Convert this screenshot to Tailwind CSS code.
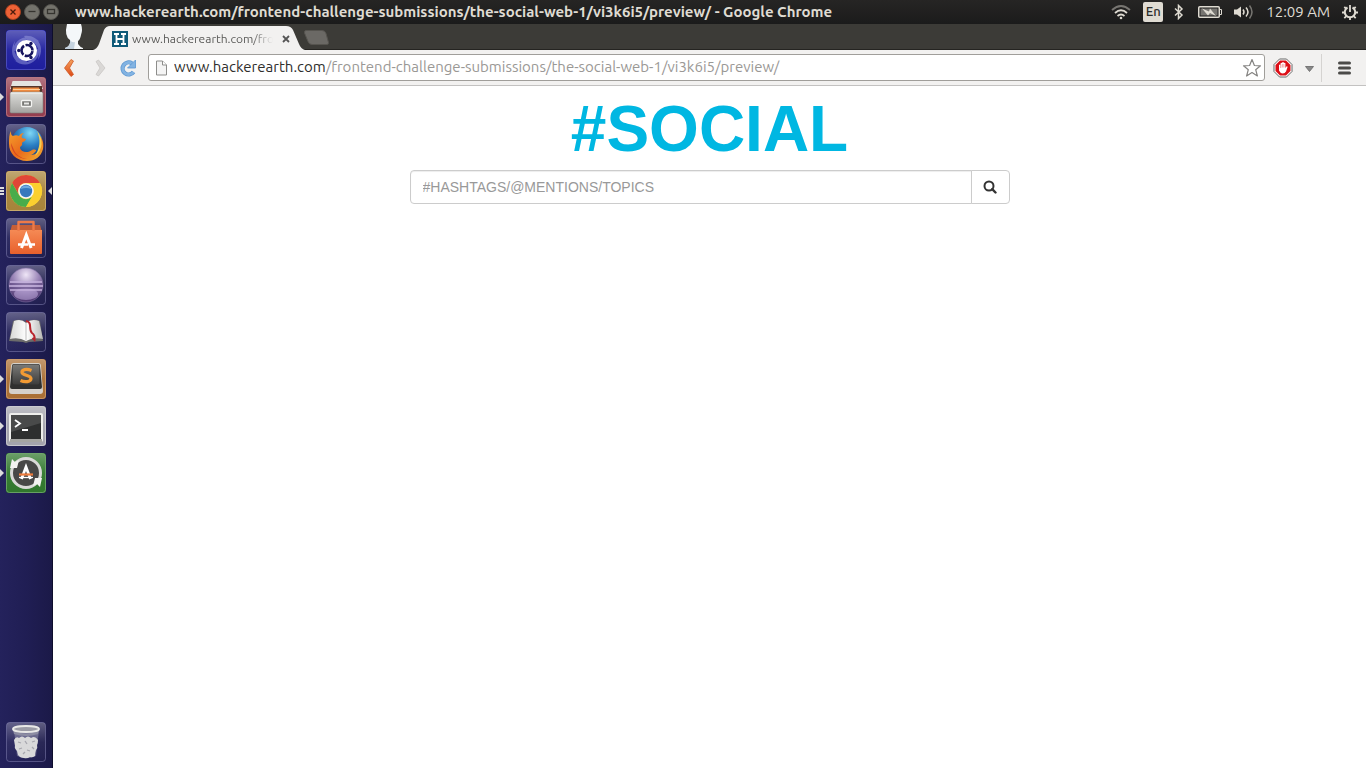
<!DOCTYPE html>
<html lang="en">
<head>
<meta charset="utf-8">
<meta name="viewport" content="width=device-width, initial-scale=1">
<title>#SOCIAL</title>
<script src="https://cdn.jsdelivr.net/npm/@tailwindcss/browser@4"></script>
</head>
<body class="flex h-screen flex-col overflow-hidden bg-white font-['Ubuntu','Noto_Sans',sans-serif]">
<svg class="absolute size-0" aria-hidden="true">
  <defs>
    <linearGradient id="gloss" x1="0" y1="0" x2="0" y2="1"><stop offset="0" stop-color="#fff" stop-opacity=".3"/><stop offset=".5" stop-color="#fff" stop-opacity=".06"/><stop offset="1" stop-color="#fff" stop-opacity=".02"/></linearGradient>
    <linearGradient id="silver" x1="0" y1="0" x2="0" y2="1"><stop offset="0" stop-color="#dededb"/><stop offset="1" stop-color="#a3a3a0"/></linearGradient>
    <linearGradient id="dark" x1="0" y1="0" x2="0" y2="1"><stop offset="0" stop-color="#7a7a78"/><stop offset="1" stop-color="#3c3c3b"/></linearGradient>
    <linearGradient id="orange" x1="0" y1="0" x2="0" y2="1"><stop offset="0" stop-color="#f58a55"/><stop offset="1" stop-color="#e8602c"/></linearGradient>
    <linearGradient id="back" x1="0" y1="0" x2="0" y2="1"><stop offset="0" stop-color="#f5a25e"/><stop offset="1" stop-color="#dd4814"/></linearGradient>
    <radialGradient id="globe" cx=".6" cy=".2" r=".8"><stop offset="0" stop-color="#7fd8f5"/><stop offset=".5" stop-color="#2a7fc4"/><stop offset="1" stop-color="#153a7c"/></radialGradient>
    <linearGradient id="fox" x1="0" y1="0" x2="1" y2="1"><stop offset="0" stop-color="#f5a02b"/><stop offset=".5" stop-color="#ea6a1c"/><stop offset="1" stop-color="#f3b431"/></linearGradient>
    <radialGradient id="purple" cx=".5" cy=".2" r=".85"><stop offset="0" stop-color="#efe6f7"/><stop offset=".45" stop-color="#9b86b8"/><stop offset="1" stop-color="#3c2560"/></radialGradient>
    <linearGradient id="page" x1="0" y1="0" x2="1" y2="0"><stop offset="0" stop-color="#d8d8d6"/><stop offset=".5" stop-color="#fff"/><stop offset="1" stop-color="#b9b9b7"/></linearGradient>
  </defs>
</svg>

<!-- Top panel -->
<header class="flex h-6 shrink-0 items-center bg-linear-to-b from-[#262524] to-[#1b1b1b] pr-2 pl-[5px] text-[#dfdbd2]">
  <div class="flex gap-[3px]">
    <button aria-label="Close" class="size-4"><svg viewBox="0 0 16 16"><circle cx="8" cy="8" r="7.500" fill="#ee6236" stroke="#a8411f"/><path d="M5.500 5.500l5 5m0-5l-5 5" stroke="#4a1c0c" stroke-width="1.300"/></svg></button>
    <button aria-label="Minimize" class="size-4"><svg viewBox="0 0 16 16"><circle cx="8" cy="8" r="7.500" fill="#73726b" stroke="#55544f"/><path d="M4.500 7.500h7" stroke="#35342f" stroke-width="1.300"/></svg></button>
    <button aria-label="Restore" class="size-4"><svg viewBox="0 0 16 16"><circle cx="8" cy="8" r="7.500" fill="#73726b" stroke="#55544f"/><rect x="4.500" y="5.500" width="7" height="4" fill="none" stroke="#35342f" stroke-width="1.300"/></svg></button>
  </div>
  <h2 class="ml-4 flex-1 truncate text-[15px] leading-6 font-bold">www.hackerearth.com/frontend-challenge-submissions/the-social-web-1/vi3k6i5/preview/ - Google Chrome</h2>
  <div class="flex h-6 items-center text-[15px]">
    <svg class="h-4 w-5" viewBox="0 0 20 16" fill="none" stroke-width="1.800"><path d="M1 6q9-8 18 0" stroke="#777571"/><path d="M4 9q6-5.500 12 0M6.500 12q3.500-3 7 0" stroke="#dfdbd2"/><circle cx="10" cy="14" r="1.300" fill="#dfdbd2"/></svg>
    <span class="ml-3 flex h-5 w-5 items-center justify-center rounded-xs bg-[#dfdbd2] text-[13px] font-medium text-[#2c2b29]">En</span>
    <svg class="ml-[11px] h-4 w-2.5" viewBox="0 0 10 16" fill="none" stroke="#dfdbd2" stroke-width="1.500"><path d="M1 4.500l7 6.500-3.500 3.500V1.500L8 5 1 11.500"/></svg>
    <svg class="ml-3.5 h-4 w-6" viewBox="0 0 24 16"><rect x=".75" y="2.750" width="20.500" height="10.500" rx="1" fill="none" stroke="#dfdbd2" stroke-width="1.500"/><rect x="2.500" y="4.500" width="17" height="7" fill="#777571"/><path d="M22 5.500h1.500v5H22" fill="none" stroke="#dfdbd2"/><path d="M4 4.500l7 3 1-3 6 7.500-6-3-2 2.500z" fill="#dfdbd2"/></svg>
    <svg class="ml-3 h-4 w-5" viewBox="0 0 20 16" fill="none" stroke="#dfdbd2" stroke-width="1.500"><path d="M0 5.500h3L7 2.500v11l-4-3H0z" fill="#dfdbd2" stroke="none"/><path d="M9 5.500q2 2.500 0 5M12 3.500q4 4.500 0 9"/><path d="M15.500 1.500q5 6.500 0 13" stroke="#777571"/></svg>
    <time class="ml-3 whitespace-nowrap">12:09 AM</time>
    <svg class="ml-3 size-4" viewBox="0 0 16 16" fill="none" stroke="#dfdbd2"><path d="M5.500 3.500a5.200 5.200 0 1 0 5 0" stroke-width="2"/><path d="M8 1v7M8 13v3M0 8.500h3M13 8.500h3M2.300 2.800l2 2M13.700 2.800l-2 2M2.300 14.200l2-2M13.700 14.200l-2-2" stroke-width="1.800"/></svg>
  </div>
</header>

<div class="flex min-h-0 flex-1">
  <!-- Launcher -->
  <nav aria-label="Launcher" class="flex w-[53px] shrink-0 flex-col gap-[7px] border-r border-[#0e0e2c] bg-linear-to-r from-[#24225c] via-[#201e54] to-[#1b1948] pt-1.5 pb-1.5 pl-1.5">
    <button aria-label="Dash" class="size-10"><svg viewBox="0 0 40 40"><rect width="40" height="40" rx="3" fill="#1a1a9c"/><rect x=".5" y=".5" width="39" height="39" rx="3" fill="url(#gloss)" stroke="#6668d0" stroke-opacity=".6"/><path d="M7 22C7 8 24 2 34 12 25 6 14 9 11 20zM33 18c2 14-14 22-25 12 10 6 20 2 21-9zM18 6c14-2 22 12 14 24 3-10-1-18-11-20zM22 34C8 36 2 22 9 11c-3 10 1 18 11 19z" fill="#b9bdf0" opacity=".38"/><circle cx="20.500" cy="20.500" r="10.500" fill="#fff"/><circle cx="21" cy="20.500" r="5.500" fill="none" stroke="#17155f" stroke-width="2.600" stroke-dasharray="10 1.520" stroke-dashoffset="-.7"/><g fill="#17155f"><circle cx="12.800" cy="20.500" r="1.700"/><circle cx="25" cy="13.500" r="1.700"/><circle cx="25" cy="27.500" r="1.700"/></g></svg></button>
    <button aria-label="Files" class="relative size-10"><svg viewBox="0 0 40 40"><rect width="40" height="40" rx="3" fill="#923a4c"/><rect x=".5" y=".5" width="39" height="39" rx="3" fill="url(#gloss)" stroke="#c08490" stroke-opacity=".7"/><path d="M7 4h26q1 0 2 3l2 5H4l2-6q0-2 1-2z" fill="#e4e4e1"/><path d="M5 9h31v7H5z" fill="#54362a"/><path d="M7 10.500h26l1 5H6z" fill="#ee8b41"/><path d="M7 12.500h27" stroke="#ffd09a"/><rect x="4" y="15" width="33" height="21" rx="1.500" fill="url(#silver)" stroke="#7d7d7a" stroke-width=".6"/><path d="M5 16h31" stroke="#f4f4f2"/><rect x="15.500" y="23.500" width="10" height="6" rx="1" fill="#777774" stroke="#f4f4f2" stroke-width="1.300"/><rect x="18" y="25.500" width="5" height="2" fill="#e8e8e6"/></svg><i class="absolute top-4 -left-1.5 border-y-4 border-l-4 border-y-transparent border-l-[#dcdcdc]"></i></button>
    <button aria-label="Firefox" class="size-10"><svg viewBox="0 0 40 40"><rect x=".5" y=".5" width="39" height="39" rx="3" fill="url(#gloss)" stroke="#8988b8" stroke-opacity=".5"/><circle cx="21" cy="18.500" r="15.500" fill="url(#globe)"/><path d="M5 7c0 3 0 4 2 5 2-1 4-1 6 0 1-2 3-3 5-3-2 2-3 3-2 5l4 1c0 2-4 3-4 4 1 3-2 3-2 5 1 5 9 5 12 2 2-1 5 0 4 1-2 2-3 4-7 4 7 1 12-5 12-11 0-4-1-7-3-10 5 4 6 10 5 15-2 8-8 12-16 12C10 37 3 29 3 20c0-5 0-10 2-13z" fill="url(#fox)"/><path d="M31 7c7 8 6 19-2 25 5-8 6-16 2-25z" fill="#f6ce51"/><path d="M5 19c0 9 7 16 16 16-6-1-11-4-13-9z" fill="#d64722"/></svg></button>
    <button aria-label="Google Chrome" class="relative size-10"><svg viewBox="0 0 40 40"><rect width="40" height="40" rx="3" fill="#a58136"/><rect x=".5" y=".5" width="39" height="39" rx="3" fill="url(#gloss)" stroke="#d4b981" stroke-opacity=".7"/><circle cx="20" cy="20" r="16" fill="#fcd435"/><path d="M6.100 12A16 16 0 0 1 33.900 12H20a8 8 0 0 0-6.900 12z" fill="#e04637"/><path d="M6.100 12A16 16 0 0 0 20 36l7-12a8 8 0 0 1-14 0z" fill="#49ac4b"/><path d="M20 12h13.900A16 16 0 0 1 20 36l7-12a8 8 0 0 0-7-12z" fill="#fbd02f"/><circle cx="20" cy="20" r="7.800" fill="#f5f5f5"/><circle cx="20" cy="20" r="6.200" fill="#3778bd"/><path d="M14.500 18a6 6 0 0 1 11 0q-5-2-11 0" fill="#6faade"/></svg><span class="absolute top-4 -left-1.5 flex flex-col gap-px"><i class="h-0.5 w-1 bg-[#dcdcdc]"></i><i class="h-0.5 w-1 bg-[#dcdcdc]"></i><i class="h-0.5 w-1 bg-[#dcdcdc]"></i></span><i class="absolute top-4 -right-1.5 border-y-4 border-r-4 border-y-transparent border-r-[#dcdcdc]"></i></button>
    <button aria-label="Ubuntu Software Center" class="size-10"><svg viewBox="0 0 40 40"><rect x=".5" y=".5" width="39" height="39" rx="3" fill="url(#gloss)" stroke="#8988b8" stroke-opacity=".5"/><path d="M6 7h28l2 7H4z" fill="#c65f37"/><path d="M4 12h32v23q0 1-1 1H5q-1 0-1-1z" fill="url(#orange)"/><path d="M12.500 13V4h15v9" fill="none" stroke="#ee7a48" stroke-width="2.400" stroke-linejoin="round"/><path d="M15.500 30l4.800-13 4.800 13" fill="none" stroke="#fff" stroke-width="3"/><path d="M12 26.500h10m3 0h4" stroke="#fff" stroke-width="2.400"/></svg></button>
    <button aria-label="Eclipse" class="size-10"><svg viewBox="0 0 40 40"><rect x=".5" y=".5" width="39" height="39" rx="3" fill="url(#gloss)" stroke="#8988b8" stroke-opacity=".5"/><circle cx="20" cy="20" r="17" fill="url(#purple)" stroke="#8170a3" stroke-width=".6"/><ellipse cx="20" cy="29" rx="12" ry="6" fill="#c8b4e6" opacity=".5"/><path d="M4 17h32M3 21h34M4 25h32" stroke="#c3b0dc" stroke-width="1.300"/><path d="M4 19h32M4 23h32" stroke="#5d4680" stroke-width="1"/></svg></button>
    <button aria-label="Dictionary" class="size-10"><svg viewBox="0 0 40 40"><rect x=".5" y=".5" width="39" height="39" rx="3" fill="url(#gloss)" stroke="#8988b8" stroke-opacity=".5"/><path d="M3 29L7 9q7-3 13 1 7-4 14-1l3 20-14 1-3 1-3-1z" fill="#6c6c6b"/><path d="M4 27L8 9q7-3 12 2v18q-7-4-16-2zM20 11q6-5 13-2l4 18q-10-2-17 2z" fill="url(#page)"/><path d="M20 11v17" stroke="#bbb"/><path d="M20 9c7 1 2 9 6 12 3 2 3 4 2.500 7l-2-2" fill="none" stroke="#b8242c" stroke-width="2"/></svg></button>
    <button aria-label="Sublime Text" class="relative size-10"><svg viewBox="0 0 40 40"><rect width="40" height="40" rx="3" fill="#a86c30"/><rect x=".5" y=".5" width="39" height="39" rx="3" fill="url(#gloss)" stroke="#d6a678" stroke-opacity=".7"/><path d="M5 7q0-3 3-3h24q3 0 3 3l2 25q0 3-3 3H6q-3 0-3-3z" fill="#d5d1cb"/><path d="M6 7q0-2 2-2h24q2 0 2 2l2 21q0 2-2 2H6q-2 0-2-2z" fill="#30302f"/><rect x="6.500" y="5.500" width="27" height="20" rx="2" fill="url(#dark)"/><path d="M25.500 11.500c-5-2-10-1-9.500 2s9 2.500 9 6-6 4-10.500 2" fill="none" stroke="#f39b33" stroke-width="3.200"/></svg><i class="absolute top-4 -left-1.5 border-y-4 border-l-4 border-y-transparent border-l-[#dcdcdc]"></i></button>
    <button aria-label="Terminal" class="relative size-10"><svg viewBox="0 0 40 40"><rect width="40" height="40" rx="3" fill="#a2a2ab"/><rect x=".5" y=".5" width="39" height="39" rx="3" fill="url(#gloss)" stroke="#d5d5da" stroke-opacity=".7"/><rect x="3" y="7" width="34" height="29" rx="2" fill="#efefed"/><rect x="4" y="33" width="32" height="3" fill="#a5a5a2"/><rect x="5" y="9" width="30" height="24" fill="#2e2f2f"/><path d="M5 9h30v8L5 26z" fill="#646665" opacity=".5"/><path d="M9 14l5 3.500L9 21M16 24h6" fill="none" stroke="#fff" stroke-width="1.800"/></svg><i class="absolute top-4 -left-1.5 border-y-4 border-l-4 border-y-transparent border-l-[#dcdcdc]"></i></button>
    <button aria-label="Software Updater" class="relative size-10"><svg viewBox="0 0 40 40"><rect width="40" height="40" rx="3" fill="#2c7528"/><rect x=".5" y=".5" width="39" height="39" rx="3" fill="url(#gloss)" stroke="#7fb27a" stroke-opacity=".7"/><circle cx="20" cy="20" r="14.500" fill="#484847" stroke="#d9d9d7" stroke-width="3"/><path d="M4 15L6 6l3 3 4-2-2 8zM36 25l-2 9-3-3-4 2 2-8z" fill="#f3f3f1"/><path d="M15.500 26l4.500-12 4.500 12" fill="none" stroke="#fff" stroke-width="2.800"/><path d="M13 21.500h14" stroke="#ee7c3d" stroke-width="2.200"/><path d="M13 24.500h14" stroke="#fff" stroke-width="1.300"/></svg><i class="absolute top-4 -left-1.5 border-y-4 border-l-4 border-y-transparent border-l-[#dcdcdc]"></i></button>
    <button aria-label="Trash" class="mt-auto size-10"><svg viewBox="0 0 40 40"><rect x=".5" y=".5" width="39" height="39" rx="3" fill="url(#gloss)" stroke="#8988b8" stroke-opacity=".5"/><path d="M8 8h25l-3 26q-9 4-19 0z" fill="#d8d8e5" opacity=".3"/><path d="M8 18q2-4 5-2 3-3 6 0 3-3 6 0 4-3 7 2 0 3-1 5 1 3-1 5-1 3-1 6-3 2-5 1-3 2-6 1-4 0-6-3l-1-4q-3-3-2-5z" fill="#d9d9da"/><path d="M12 20l3 1M19 19l2 3M26 20l3-1M13 27l3-1M21 28l3 1M26 25l2 2M17 32l2-2" fill="none" stroke="#a7a7ae" stroke-width="1.300"/><path d="M7 8q13 7 26 0l-1 4q-12 4-24 0z" fill="#8d8da3"/><ellipse cx="20" cy="7" rx="13" ry="3" fill="#9c9ca6" stroke="#e9e9e7" stroke-width="1.800"/></svg></button>
  </nav>

  <div class="flex min-w-0 flex-1 flex-col">
    <!-- Tab strip -->
    <div class="flex h-[26px] shrink-0 items-end border-b border-[#252421] bg-[#3c3b37]">
      <svg class="ml-2.5 h-[25px] w-[22px] shrink-0" viewBox="0 0 22 25"><path d="M4 0h14q2 6 0 11-1 5-3 6v3q2 3 5 4v1H2v-1q4-1 5-5v-3Q1 12 4 0z" fill="#f4f7f9"/><path d="M7 16q2 3 5 2l-1 7H2v-1q4-1 5-5z" fill="#c5d3df"/></svg>
      <div class="relative -mb-px h-[25px] w-[226px] shrink-0">
        <svg class="absolute inset-0 h-[25px] w-[226px]" viewBox="0 0 226 25"><path d="M8 25q4-1 6-6l5-14q2-4 6-4H201q5 0 7 4l6 14q2 5 6 6z" fill="#f2f1f0"/></svg>
        <div class="relative flex h-full items-center pl-[27px] text-[#5a5a58]">
          <svg class="mt-0.5 size-4 shrink-0" viewBox="0 0 16 16"><rect width="16" height="16" fill="#0f5a78"/><path d="M2 3h5M9 3h5M2 13h5M9 13h5M4.500 3v10M11.500 3v10M4.500 8h7" stroke="#fff" stroke-width="1.800"/></svg>
          <span class="mt-0.5 ml-1 w-[141px] mask-r-from-85% text-[12px] whitespace-nowrap">www.hackerearth.com/fro</span>
          <button aria-label="Close tab" class="mt-0.5 ml-2 size-2.5"><svg viewBox="0 0 10 10"><path d="M2 2l6 6m0-6L2 8" stroke="#555" stroke-width="1.800"/></svg></button>
        </div>
      </div>
      <button aria-label="New tab" class="-ml-2 mb-1 h-[15px] w-[26px]"><svg viewBox="0 0 26 15"><path d="M3 .5h16q3 0 4 3l2.500 9q.5 2-1.500 2H9q-3 0-4-3L1.500 3Q1 .5 3 .5z" fill="#6b6965" stroke="#56544f"/></svg></button>
    </div>

    <!-- Toolbar -->
    <div class="flex h-9 shrink-0 items-center border-b border-[#c3c2c1] bg-[#f2f1f0] pr-[15px] pl-[7px]">
      <button aria-label="Back" class="size-5"><svg viewBox="0 0 20 20"><path d="M11 1.500L13.500 3l-4 7 4 6.500L11 18.500 4.500 10z" fill="url(#back)" stroke="#cf5a27" stroke-width=".8" stroke-linejoin="round"/></svg></button>
      <button aria-label="Forward" class="ml-2.5 size-5"><svg viewBox="0 0 20 20"><path d="M8.500 2L6 3.500l4 6.500-4 6.500L8.500 18l6.500-8z" fill="#dad8d6" stroke="#c9c7c4" stroke-width=".8" stroke-linejoin="round"/></svg></button>
      <button aria-label="Reload" class="ml-2 size-5"><svg viewBox="0 0 20 20"><path d="M14 5.500A6 6 0 1 0 15.500 14" fill="none" stroke="#5b95d0" stroke-width="4.200"/><path d="M14 5.500A6 6 0 1 0 15.500 14" fill="none" stroke="#82b3e2" stroke-width="2.800"/><path d="M17.500 2v8h-8z" fill="#82b3e2" stroke="#5b95d0" stroke-width=".8"/></svg></button>
      <div class="ml-2.5 flex h-[27px] min-w-0 flex-1 items-center rounded-[3px] border border-[#a09e9a] bg-white pr-0.5 pl-1.5">
        <svg class="h-4 w-[13px] shrink-0" viewBox="0 0 13 16"><path d="M1.500 1h6l4 4v10h-10z" fill="#f4f4f4" stroke="#8d8d8b"/><path d="M7.500 1v4h4" fill="#fff" stroke="#8d8d8b"/></svg>
        <a href="#" class="ml-1.5 flex-1 truncate text-[15px] text-[#9a9895]"><span class="text-[#2f2e2c]">www.hackerearth.com</span>/frontend-challenge-submissions/the-social-web-1/vi3k6i5/preview/</a>
        <button aria-label="Bookmark this page" class="size-5"><svg viewBox="0 0 20 20"><path d="M10 1.500l2.400 6 6.100.3-4.800 3.900 1.700 6.300L10 14.500 4.600 18l1.700-6.300L1.500 7.800l6.100-.3z" fill="#fff" stroke="#858482" stroke-width="1.200" stroke-linejoin="round"/></svg></button>
      </div>
      <button aria-label="Ad blocker" class="ml-2 size-5"><svg viewBox="0 0 20 20"><path d="M6.500 1h7L19 6.500v7L13.500 19h-7L1 13.500v-7z" fill="#fff" stroke="#666"/><path d="M7 2.500h6L17.500 7v6L13 17.500H7L2.500 13V7z" fill="#dc0f17"/><path d="M6 7q.8-1 1.600 0V5.200q.7-1 1.500 0V4.500q.9-1 1.800 0v.7q.8-.8 1.500 0V10l1-1.500q1.300-.5 1.100.8L13 13.500q-1 2-3.300 2T6 12.500z" fill="#fff"/><path d="M7.700 7v3M9.300 6v3.500M10.900 6v3.500" stroke="#dc0f17" stroke-width=".4"/></svg></button>
      <button aria-label="More" class="ml-2 h-5 w-4"><svg viewBox="0 0 16 20"><path d="M4.500 8.500h8l-4 5z" fill="#888" stroke="#666" stroke-width=".8"/></svg></button>
      <span class="ml-1 h-7 w-px bg-[#d5d3d1]"></span>
      <button aria-label="Menu" class="ml-4 h-4 w-[13px]"><svg viewBox="0 0 13 16"><path d="M1.500 3h10M1.500 8h10M1.500 13h10" stroke="#4b4a48" stroke-width="3" stroke-linecap="round"/></svg></button>
    </div>

    <!-- Page -->
    <main class="flex-1 bg-white px-4 font-['Liberation_Sans',Arial,sans-serif]">
      <h1 class="pt-2 text-center text-[64px] leading-[70px] font-bold text-[#00b7e2]">#SOCIAL</h1>
      <form class="mx-auto mt-1.5 flex h-[34px] max-w-[600px]">
        <input type="text" aria-label="Search" placeholder="#HASHTAGS/@MENTIONS/TOPICS" class="min-w-0 flex-1 rounded-l border border-[#ccc] px-3 text-[14px] text-[#555] shadow-[inset_0_1px_1px_rgba(0,0,0,0.075)] placeholder:text-[#999]">
        <button type="button" aria-label="Submit search" class="-ml-px flex w-[39px] items-center justify-center rounded-r border border-[#ccc] bg-white"><svg class="size-3.5" viewBox="0 0 14 14" fill="none" stroke="#333"><circle cx="6" cy="6" r="4.500" stroke-width="2"/><path d="M9.200 9.200l3.300 3.300" stroke-width="2.400" stroke-linecap="round"/></svg></button>
      </form>
    </main>
  </div>
</div>
</body>
</html>
